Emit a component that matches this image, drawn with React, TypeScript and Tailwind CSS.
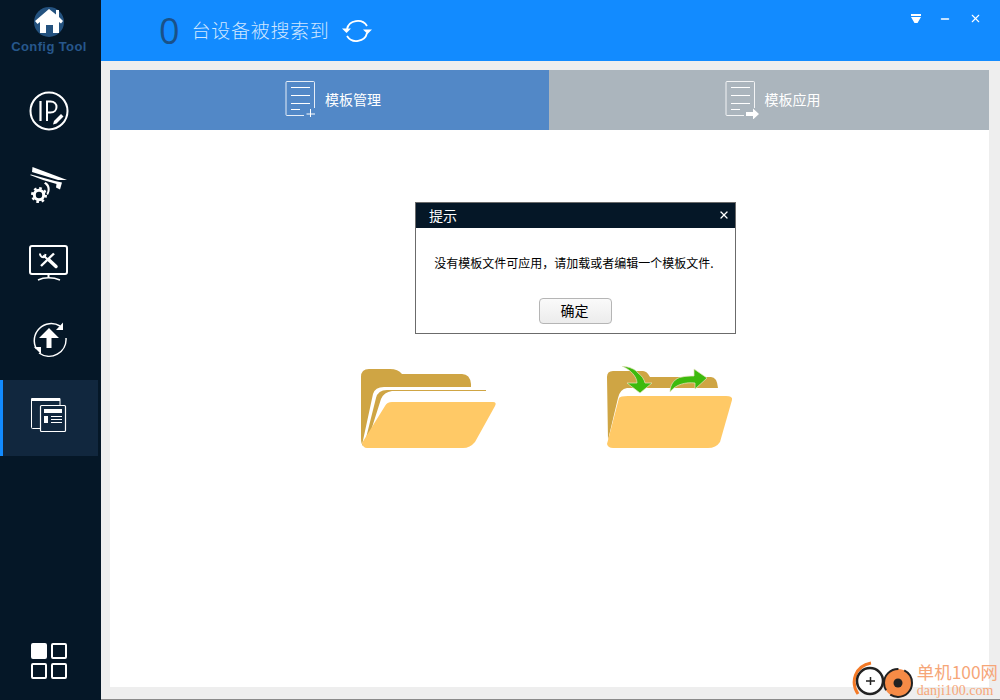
import { Minus, X } from "lucide-react";

const cjk = { fontFamily: '"Noto Sans CJK SC", "Liberation Sans", sans-serif' };

function HomeLogo() {
  return (
    <svg width="32" height="32" viewBox="0 0 32 32">
      <circle cx="16" cy="16" r="15" fill="#24527f" />
      <path d="M16 3 L23 8.500 V4 H26 V11 L30 15 L28 17.500 L26 16 V27 H20 V19 H13 V27 H7 V16 L4.500 18 L2 15 Z" fill="#fff" />
    </svg>
  );
}

function IpIcon() {
  return (
    <svg width="40" height="40" viewBox="0 0 40 40" fill="none" stroke="#fff">
      <circle cx="20" cy="20" r="18.500" strokeWidth="2" />
      <path d="M11.500 10 V30" strokeWidth="2.200" />
      <path d="M18 30 V10.500 H21.500 C29.500 10.500 29.500 21.500 21.500 21.500 H18.500" strokeWidth="2" />
      <path d="M25 30 L32 23 L34.500 25.500 L27.500 32.500 L24 33.500 Z" fill="#fff" stroke="none" />
    </svg>
  );
}

function CameraIcon() {
  return (
    <svg width="38" height="40" viewBox="0 0 38 40" fill="#fff">
      <path d="M2.500 0 L37 13 L28 13 L2 5 Z" />
      <path d="M0 8 L1 7.500 L25 14 L32 15.500 L30 22.500 L26 20.500 L26.500 17 L13 13 Z" />
      <path d="M15.500 15 C20 17 21 23 18 28 L16.500 27 C18.500 23 18 19 14 16.500 Z" />
      <circle cx="9" cy="28" r="4.700" fill="none" stroke="#fff" strokeWidth="3" />
      <circle cx="9" cy="28" r="6.800" fill="none" stroke="#fff" strokeWidth="2.400" strokeDasharray="2.600 2.740" />
    </svg>
  );
}

function MonitorIcon() {
  return (
    <svg width="40" height="36" viewBox="0 0 40 36" fill="none" stroke="#fff">
      <rect x="1" y="1" width="37" height="28" rx="2" strokeWidth="2" />
      <path d="M19.500 29 V32" strokeWidth="2" />
      <path d="M9 35 C15 32 24 32 31 35" strokeWidth="1.500" />
      <path d="M20 15 L27 21.500" strokeWidth="3.500" strokeLinecap="round" />
      <path d="M14 10.500 L21 16" strokeWidth="2" />
      <path d="M11 8.500 C11 12 14 13 16 11.500 L16.500 9" strokeWidth="2" />
      <path d="M25 8.500 L12 21" strokeWidth="2.400" />
    </svg>
  );
}

function UploadIcon() {
  return (
    <svg width="38" height="38" viewBox="0 0 38 38" fill="none" stroke="#fff">
      <path d="M6.500 29 A17 17 0 0 1 30 6" strokeWidth="1.500" />
      <path d="M36 18 A17 17 0 0 1 9 33" strokeWidth="1.500" />
      <path d="M33 2.500 V10 H26 Z" fill="#fff" stroke="none" />
      <path d="M4 27 H11 V34 Z" fill="#fff" stroke="none" />
      <path d="M19 8 L29 18 H21.500 V28 H16.500 V18 H9 Z" fill="#fff" stroke="none" />
    </svg>
  );
}

function TemplatesIcon() {
  return (
    <svg width="36" height="36" viewBox="0 0 36 36" fill="none" stroke="#fff">
      <path d="M9 31.500 H1.500 Q0.500 31.500 0.500 30.500 V1.500 H29 V8" strokeWidth="1" />
      <path d="M1 1 H29 V4 H1 Z" fill="#fff" stroke="none" />
      <rect x="9.500" y="8.500" width="25" height="26" rx="1" strokeWidth="1.200" />
      <path d="M13 12 H31 V16 H13 Z" fill="#fff" stroke="none" />
      <path d="M13 19 H17 V26 H13 Z" fill="#fff" stroke="none" />
      <path d="M20 19.500 H31 M20 22.500 H31 M20 25.500 H31" strokeWidth="1" />
    </svg>
  );
}

function GridIcon() {
  return (
    <svg width="37" height="37" viewBox="0 0 37 37" fill="none" stroke="#fff" strokeWidth="2">
      <rect x="1" y="1" width="14" height="14" rx="1" fill="#fff" />
      <rect x="21" y="1" width="14" height="14" rx="1" />
      <rect x="1" y="21" width="14" height="14" rx="1" />
      <rect x="21" y="21" width="14" height="14" rx="1" />
    </svg>
  );
}

function RefreshIcon() {
  return (
    <svg width="30" height="24" viewBox="0 0 30 24" fill="none" stroke="#fff" strokeWidth="1.800">
      <path d="M5 10 C7 1 20 -1 25 7" />
      <path d="M25 14 C23 23 10 25 5 17" />
      <path d="M0 9.500 H9 L4.500 14 Z" fill="#fff" stroke="none" />
      <path d="M21 10.500 H30 L25.500 15 Z" fill="#fff" stroke="none" />
    </svg>
  );
}

function DocIcon({ plus }: { plus?: boolean }) {
  return (
    <svg width="34" height="38" viewBox="0 0 34 38" fill="none" stroke="#fff">
      <path d="M29.500 27 V1.500 Q29.500 0.500 28.500 0.500 H2 Q1 0.500 1 1.500 V33.500 Q1 34.500 2 34.500 H19" strokeWidth="1" strokeOpacity="0.85" />
      <path d="M6 6.500 H25 M6 14.500 H25 M6 22.500 H25 M6 28.500 H15" strokeWidth="1" />
      {plus ? (
        <path d="M25.500 28 V36 M21.500 33 H30" strokeWidth="1" />
      ) : (
        <path d="M21 31 H28 V27.500 L34 33 L28 38.500 V35 H21 Z" fill="#fff" stroke="none" />
      )}
    </svg>
  );
}

function OpenFolder() {
  return (
    <svg width="137" height="82" viewBox="0 0 137 82">
      <path d="M1 9 Q1 1 9 1 H30 Q38 1 42 6 H102 Q110 6 111 16 V24 H20 L3 78 Q1 76 1 70 Z" fill="#cfa544" />
      <path d="M2 77 L13 26 Q15 19 24 19 H125 V34 H30 Z" fill="#fff" />
      <path d="M5 74 L16 30 Q18 22 27 22 H126 V23 H32 Q24 24 21 31 L8 72 Z" fill="#cfa544" />
      <path d="M2 75 L25 38 Q27 34 32 34 H133 Q137 34 135 38 L115 74 Q110 80 103 80 H7 Q3 80 2 75 Z" fill="#ffc966" />
    </svg>
  );
}

function TransferFolder() {
  return (
    <svg width="128" height="84" viewBox="0 -2 128 84">
      <path d="M1 9 Q1 3 7 3 H37 Q41 3 44 9 H105 Q111 9 112 20 H21 Q14 21 12 30 L2 72 Z" fill="#cfa544" />
      <path d="M1 76 L13 30 Q14 28 22 28 H120 Q127 28 126 32 L114 74 Q110 80 102 80 H7 Q2 80 1 76 Z" fill="#ffc966" />
      <path d="M16 -2 C24 -1 29 1 32 5 C36 8 38 11 39 15 H46 L34 25 L21 15 H31 C31 9 25 2 16 -2 Z" fill="#3dba0d" stroke="#e8e4c0" strokeWidth="0.700" />
      <path d="M64 24 C64 16 69 10 76 9 C80 8 84 8 88 8 V1 L101 10 L89 21 V15 C80 14 70 16 64 24 Z" fill="#3dba0d" stroke="#e8e4c0" strokeWidth="0.700" />
    </svg>
  );
}

function Watermark() {
  return (
    <div className="absolute right-0 bottom-0 flex h-[44px] items-end pr-[2px]">
      <svg width="65" height="40" viewBox="0 0 65 40" fill="none">
        <path d="M7 34 C-1 22 4 6 20 3" stroke="#f47a27" strokeWidth="3" />
        <circle cx="19" cy="21" r="13" stroke="#222" strokeWidth="2.500" fill="#fff" />
        <path d="M15 21 H24 M19.500 17 V25" stroke="#222" strokeWidth="1.500" />
        <circle cx="47" cy="23" r="14" fill="#f68b46" stroke="#222" strokeWidth="2" strokeDasharray="30 6" />
        <circle cx="47" cy="23" r="4.500" fill="#222" />
      </svg>
      <div className="ml-[1px] flex flex-col items-start pb-[1px]">
        <span className="text-[17.400px] leading-[22px] text-[#f6a678]" style={cjk}>单机100网</span>
        <span className="text-[14px] leading-[16px] text-[#f6a678]" style={{ fontFamily: '"Liberation Serif", serif' }}>danji100.com</span>
      </div>
    </div>
  );
}

const navItems = [
  { icon: <IpIcon />, height: "h-[76px]", active: false },
  { icon: <CameraIcon />, height: "h-[76px]", active: false },
  { icon: <MonitorIcon />, height: "h-[76px]", active: false },
  { icon: <UploadIcon />, height: "h-[79px] pb-[4px]", active: false },
  { icon: <TemplatesIcon />, height: "h-[76px] pb-[6px] pr-[3px]", active: true },
];

export default function App() {
  return (
    <div className="relative flex h-[700px] w-[1000px] overflow-hidden bg-[#eeeeee]" style={cjk}>
      {/* Sidebar */}
      <aside className="flex w-[101px] shrink-0 flex-col bg-[#051727]">
        <div className="flex h-[73px] w-[98px] flex-col items-center pt-[6px]">
          <HomeLogo />
          <span
            className="mt-[1px] text-[13px] leading-[15px] font-bold tracking-[0.4px] text-[#27578c]"
            style={{ fontFamily: '"Liberation Sans", sans-serif' }}
          >
            Config Tool
          </span>
        </div>
        <nav className="flex flex-col">
          {navItems.map((item, i) =>
            item.active ? (
              <div key={i} className={`flex w-[98px] items-center justify-center border-l-[3px] border-[#128bff] bg-[#11273e] ${item.height}`}>
                {item.icon}
              </div>
            ) : (
              <div key={i} className={`flex w-[98px] items-center justify-center ${item.height}`}>
                {item.icon}
              </div>
            )
          )}
        </nav>
        <div className="mt-auto flex justify-center pr-[3px] pb-[20px]">
          <GridIcon />
        </div>
      </aside>

      <main className="flex min-w-0 flex-1 flex-col">
        {/* Header */}
        <header className="flex h-[61px] shrink-0 items-center justify-between bg-[#128bff] pl-[58px]">
          <div className="flex items-center">
            <span className="text-[36px] leading-none font-normal text-[#1a5188]" style={{ fontFamily: '"Open Sans", sans-serif' }}>0</span>
            <span className="ml-[12px] text-[19px] font-light tracking-[0.7px] text-[#cfe6ff]">台设备被搜索到</span>
            <span className="ml-[12px] flex"><RefreshIcon /></span>
          </div>
          <div className="mb-[24px] flex items-center gap-[18px] pr-[18px]">
            <svg width="10" height="10" viewBox="0 0 10 10" fill="#fff">
              <path d="M0 0 H10 V2 H0 Z M0 3 H10 L6.500 9 H3.500 Z" />
            </svg>
            <Minus size={12} color="#fff" strokeWidth={3} />
            <X size={13} color="#fff" strokeWidth={2} />
          </div>
        </header>

        {/* Tabs and panel */}
        <div className="flex flex-1 flex-col pt-[9px] pr-[11px] pb-[13px] pl-[9px]">
          <div className="flex h-[60px] shrink-0">
            <div className="flex w-[439px] items-center justify-center gap-[6px] bg-[#5288c7] pl-[8px] text-[14px] text-white">
              <DocIcon plus />
              <span className="mr-[1px] mb-[1px]">模板管理</span>
            </div>
            <div className="flex flex-1 items-center justify-center gap-[6px] bg-[#abb5bd] pl-[7px] text-[14px] text-white">
              <DocIcon />
              <span className="mb-[1px]">模板应用</span>
            </div>
          </div>
          <div className="relative flex flex-1 items-start bg-white pt-[238px] pl-[250px]">
            <OpenFolder />
            <div className="mt-[-2px] ml-[109px]">
              <TransferFolder />
            </div>

            {/* Dialog */}
            <div className="absolute top-[72px] left-[305px] flex h-[132px] w-[321px] flex-col border border-[#6b6b6b] bg-white">
              <div className="flex h-[25px] shrink-0 items-center justify-between bg-[#051727] pr-[5px] pb-[1px] pl-[13px] text-[14px] text-white">
                <span>提示</span>
                <X size={12} color="#fff" strokeWidth={2.500} />
              </div>
              <div className="flex flex-1 flex-col items-center">
                <p className="mt-[25px] mr-[3px] text-[12px] leading-[20px] text-black">没有模板文件可应用，请加载或者编辑一个模板文件.</p>
                <button className="mt-[25px] h-[26px] w-[73px] rounded-[4px] border border-[#b5b5b5] bg-gradient-to-b from-[#fafafa] to-[#ececec] pr-[2px] pb-[2px] text-[14px] leading-none text-black">
                  确定
                </button>
              </div>
            </div>
          </div>
        </div>
      </main>

      <div className="absolute right-0 bottom-0 left-[101px] h-[1px] bg-[#8a8a8a]" />
      <Watermark />
    </div>
  );
}
